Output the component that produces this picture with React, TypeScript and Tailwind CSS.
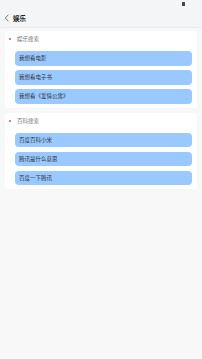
const groups = [
  { title: '娱乐搜索', items: ['我想看电影', '我想看电子书', '我想看《爱情公寓》'] },
  { title: '百科搜索', items: ['百度百科小米', '腾讯是什么意思', '百度一下腾讯'] },
];

export default function App() {
  return (
    <div
      className="w-[202px] h-[359px] bg-[#f8f8f8] flex flex-col"
      style={{ fontFamily: '"Noto Sans CJK SC", "Noto Sans", sans-serif' }}
    >
      {/* Header */}
      <div className="h-[28px] bg-[#f4f5f7] border-b border-[#ebebeb] relative flex items-end pb-[4px] pl-[4px]">
        <div className="absolute top-[2px] right-[17px] w-[3px] h-[4px] bg-[#444] rounded-[0.5px]" />
        <svg width="6" height="8" viewBox="0 0 6 8" className="mr-[3px] mb-[1px]">
          <path d="M4.3 0.8 L1.3 4 L4.3 7.2" fill="none" stroke="#555" strokeWidth="0.8" />
        </svg>
        <span className="text-[6.5px] leading-[10px] font-bold text-[#222]">娱乐</span>
      </div>

      <div className="flex flex-col gap-[5px] px-[5px] pt-[3px]">
        {groups.map((g) => (
          <div key={g.title} className="bg-white rounded-[3px] pt-[4px] pb-[4px]">
            <div className="flex items-center h-[8px] pl-[4px] mb-[8px]">
              <span className="w-[2px] h-[2px] rounded-full bg-[#e8465c] mr-[6px]" />
              <span className="text-[5.5px] leading-[8px] text-[#777]">{g.title}</span>
            </div>
            <div className="flex flex-col gap-[4.5px] pl-[10px] pr-[5px]">
              {g.items.map((it) => (
                <div
                  key={it}
                  className="h-[14.5px] rounded-[4px] bg-[#99c9ff] flex items-center pl-[4px] text-[5.5px] text-[#333]"
                >
                  {it}
                </div>
              ))}
            </div>
          </div>
        ))}
      </div>
    </div>
  );
}
